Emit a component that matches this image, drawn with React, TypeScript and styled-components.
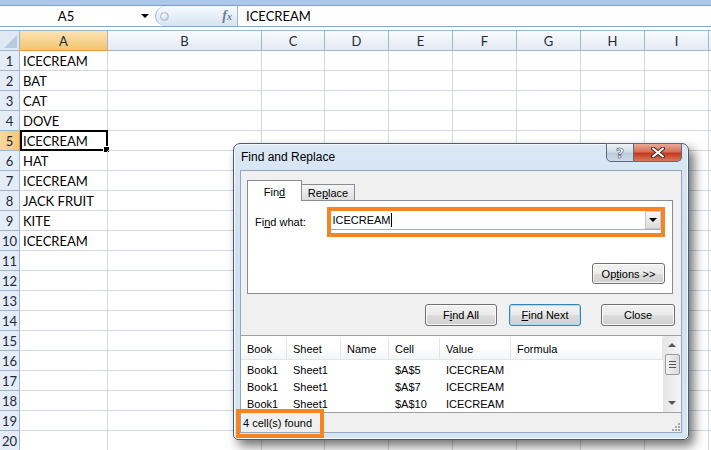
import React from 'react';
import styled, { createGlobalStyle, css } from 'styled-components';

const COLUMNS = ['A', 'B', 'C', 'D', 'E', 'F', 'G', 'H', 'I', ''];
const ROW_COUNT = 20;
const ACTIVE_ROW = 5;

const COLUMN_A: Record<number, string> = {
  1: 'ICECREAM',
  2: 'BAT',
  3: 'CAT',
  4: 'DOVE',
  5: 'ICECREAM',
  6: 'HAT',
  7: 'ICECREAM',
  8: 'JACK FRUIT',
  9: 'KITE',
  10: 'ICECREAM',
};

const LIST_COLUMNS = ['Book', 'Sheet', 'Name', 'Cell', 'Value', 'Formula'];

const RESULTS = [
  ['Book1', 'Sheet1', '', '$A$5', 'ICECREAM', ''],
  ['Book1', 'Sheet1', '', '$A$7', 'ICECREAM', ''],
  ['Book1', 'Sheet1', '', '$A$10', 'ICECREAM', ''],
];

const GlobalStyle = createGlobalStyle`
  * { box-sizing: border-box; }
  html, body { margin: 0; padding: 0; background: #fff; overflow: hidden; }
  body { font-family: Lato, "Liberation Sans", sans-serif; color: #000; }
`;

const Screen = styled.div`
  position: relative;
  width: 711px;
  height: 450px;
  overflow: hidden;
  background: #fff;
`;

/* ---------- formula bar ---------- */

const TopStrip = styled.div`
  height: 6px;
  background: #abc7ea;
  border-bottom: 1px solid #7f9dc3;
`;

const FormulaBar = styled.div`
  display: flex;
  height: 21px;
  margin-bottom: 3px;
  border-bottom: 1px solid #8da8cc;
  font-size: 13px;
`;

const NameBox = styled.div`
  display: flex;
  align-items: center;
  width: 155px;
`;

const NameValue = styled.span`
  width: 132px;
  text-align: center;
`;

const DropArrow = styled.span<{ $size?: number }>`
  width: 0;
  height: 0;
  border-left: ${(p) => p.$size ?? 4}px solid transparent;
  border-right: ${(p) => p.$size ?? 4}px solid transparent;
  border-top: ${(p) => p.$size ?? 4}px solid #000;
`;

const NameArrow = styled(DropArrow)`
  margin-left: 9px;
`;

const FxPill = styled.div`
  display: flex;
  align-items: center;
  justify-content: space-between;
  width: 83px;
  padding: 0 5px 0 4px;
  border: 1px solid #9fb5d2;
  border-width: 0 1px 0 1px;
  border-radius: 11px 0 0 11px;
  background: linear-gradient(#f8fbfe, #d6e3f2);
`;

const FxDot = styled.span`
  width: 9px;
  height: 9px;
  border-radius: 50%;
  border: 1px solid #a8b9cf;
  background: radial-gradient(circle at 35% 35%, #fff, #b7c7da);
`;

const FxLabel = styled.span`
  font-family: "Liberation Serif", serif;
  font-style: italic;
  font-weight: bold;
  font-size: 14px;
  color: #717f92;
  small {
    font-size: 10px;
  }
`;

const FormulaValue = styled.div`
  flex: 1;
  padding-left: 8px;
  line-height: 20px;
`;

/* ---------- sheet ---------- */

const Sheet = styled.div`
  display: grid;
  grid-template-columns: 20px 88px 154px 63px repeat(6, 64px) 1fr;
  grid-auto-rows: 20px;
  border-top: 1px solid #9eb6ce;
  font-size: 13px;
`;

const Corner = styled.div`
  position: relative;
  background: #dfe8f3;
  border-right: 1px solid #9eb6ce;
  border-bottom: 1px solid #9eb6ce;
  &::after {
    content: '';
    position: absolute;
    right: 2px;
    bottom: 2px;
    border-left: 13px solid transparent;
    border-bottom: 13px solid #b8c9de;
  }
`;

const headerActive = css`
  background: linear-gradient(#fae3b4, #f3c56f);
  border-bottom-color: #f29536;
`;

const ColHeader = styled.div<{ $active?: boolean }>`
  text-align: center;
  line-height: 20px;
  color: #1e2a38;
  background: linear-gradient(#f9fbfd, #e2eaf5);
  border-right: 1px solid #9eb6ce;
  border-bottom: 1px solid #9eb6ce;
  ${(p) => p.$active && headerActive}
`;

const RowHeader = styled.div<{ $active?: boolean }>`
  text-align: center;
  line-height: 20px;
  color: #1e2a38;
  background: #e4ecf7;
  border-right: 1px solid #9eb6ce;
  border-bottom: 1px solid #9eb6ce;
  ${(p) =>
    p.$active &&
    css`
      background: linear-gradient(90deg, #f9d99c, #f4c978);
      border-right-color: #f29536;
    `}
`;

const Cell = styled.div<{ $selected?: boolean }>`
  position: relative;
  padding-left: 3px;
  line-height: 20px;
  white-space: nowrap;
  border-right: 1px solid #d0d7e5;
  border-bottom: 1px solid #d0d7e5;
  ${(p) =>
    p.$selected &&
    css`
      &::before {
        content: '';
        position: absolute;
        top: -1px;
        left: 0;
        right: -1px;
        bottom: -1px;
        border: 2px solid #000;
      }
      &::after {
        content: '';
        position: absolute;
        right: -3px;
        bottom: -3px;
        width: 5px;
        height: 5px;
        background: #000;
        border: 1px solid #fff;
      }
    `}
`;

/* ---------- dialog ---------- */

const Window = styled.div`
  position: absolute;
  left: 233px;
  top: 143px;
  width: 456px;
  height: 297px;
  display: flex;
  flex-direction: column;
  padding: 0 6px 6px 6px;
  border: 1px solid #4c5d70;
  border-radius: 7px 7px 5px 5px;
  background: linear-gradient(#dbe7f4, #cddff1 35%, #d6e5f4);
  box-shadow: inset 0 0 0 1px rgba(255, 255, 255, 0.75), 5px 6px 11px rgba(0, 0, 0, 0.55);
  font-family: "Liberation Sans", Arial, sans-serif;
  font-size: 11px;
  color: #000;
`;

const TitleBar = styled.div`
  display: flex;
  align-items: center;
  height: 26px;
  flex-shrink: 0;
`;

const Title = styled.span`
  padding-left: 1px;
  font-size: 12px;
`;

const CaptionButtons = styled.div`
  display: flex;
  align-self: flex-start;
  margin: -1px 0 0 auto;
`;

const CaptionButton = styled.div<{ $close?: boolean }>`
  display: flex;
  align-items: center;
  justify-content: center;
  height: 19px;
  border: 1px solid #5a6a7e;
  ${(p) =>
    p.$close
      ? css`
          width: 48px;
          border-left: none;
          border-radius: 0 0 5px 0;
          background: linear-gradient(#e9ab9b, #d8705a 45%, #c2391f 55%, #d77a5c);
        `
      : css`
          width: 28px;
          border-radius: 0 0 0 5px;
          background: linear-gradient(#eef3f9, #d2dde9 45%, #bccadb 55%, #cdd9e6);
        `}
`;

const HelpGlyph = styled.span`
  font-family: "DejaVu Sans", sans-serif;
  font-weight: bold;
  font-size: 14px;
  line-height: 14px;
  color: #fff;
  -webkit-text-stroke: 0.6px #4a5566;
`;

const Client = styled.div`
  flex: 1;
  display: flex;
  flex-direction: column;
  background: #f0f0f0;
  border: 1px solid #93a7c0;
`;

const TabStrip = styled.div`
  display: flex;
  align-items: flex-end;
  height: 20px;
  margin: 9px 0 0 6px;
`;

const Tab = styled.div<{ $active?: boolean }>`
  display: flex;
  align-items: center;
  justify-content: center;
  border: 1px solid #898c95;
  border-bottom: none;
  ${(p) =>
    p.$active
      ? css`
          position: relative;
          z-index: 1;
          width: 55px;
          height: 21px;
          margin-bottom: -1px;
          padding-top: 1px;
          background: #fff;
        `
      : css`
          width: 53px;
          height: 16px;
          border-left: none;
          background: linear-gradient(#f6f6f6, #dcdcdc);
        `}
`;

const Acc = styled.span`
  text-decoration: underline;
`;

const TabPanel = styled.div`
  display: flex;
  flex-direction: column;
  height: 94px;
  margin: 0 8px 0 6px;
  padding: 6px 7px 9px 7px;
  background: #fff;
  border: 1px solid #898c95;
`;

const FindRow = styled.div`
  display: flex;
  align-items: center;
`;

const FieldLabel = styled.span`
  width: 73px;
`;

const Highlight = styled.div`
  width: 340px;
  height: 30px;
  padding: 0 0 3px 0;
  border: 4px solid #f68420;
  background: #fff;
`;

const ComboBox = styled.div`
  display: flex;
  align-items: center;
  height: 19px;
  padding-left: 1px;
  border-bottom: 1px solid #a5acb5;
`;

const ComboText = styled.span`
  flex: 1;
  display: flex;
  align-items: center;
`;

const Caret = styled.span`
  width: 1px;
  height: 14px;
  background: #000;
`;

const ComboArrow = styled.div`
  display: flex;
  align-items: center;
  justify-content: center;
  width: 16px;
  height: 18px;
  border: 1px solid #c6c9cf;
  background: linear-gradient(#f6f6f6, #dcdcdc);
`;

const Button = styled.div<{ $width: number; $gap?: number; $focus?: boolean }>`
  display: flex;
  align-items: center;
  justify-content: center;
  width: ${(p) => p.$width}px;
  height: 22px;
  margin-left: ${(p) => p.$gap ?? 0}px;
  border: 1px solid #707070;
  border-radius: 3px;
  background: linear-gradient(#f2f2f2, #ebebeb 50%, #dddddd 51%, #cfcfcf);
  box-shadow: inset 0 0 0 1px rgba(255, 255, 255, 0.8);
  ${(p) =>
    p.$focus &&
    css`
      border-color: #3c7fb1;
      box-shadow: inset 0 0 0 1px #a8dcf6;
    `}
`;

const OptionsButton = styled(Button)`
  align-self: flex-end;
  margin-top: auto;
  height: 21px;
`;

const ButtonRow = styled.div`
  display: flex;
  justify-content: flex-end;
  margin-top: 10px;
  padding-right: 6px;
`;

const ResultList = styled.div`
  display: flex;
  height: 78px;
  margin-top: 9px;
  background: #fff;
  border-top: 1px solid #a0a0a0;
  border-bottom: 1px solid #a0a0a0;
`;

const ListMain = styled.div`
  flex: 1;
  overflow: hidden;
`;

const listGrid = css`
  display: grid;
  grid-template-columns: 46px 54px 48px 51px 71px 1fr;
`;

const ListHeader = styled.div`
  ${listGrid};
  height: 24px;
  margin-bottom: 1px;
  padding-top: 2px;
  background: linear-gradient(#fff, #fff 50%, #f4f5f7);
  border-bottom: 1px solid #e3e5e8;
`;

const HeaderCell = styled.div`
  display: flex;
  align-items: center;
  padding-left: 6px;
  border-right: 1px solid #e3e5e8;
`;

const ListRow = styled.div`
  ${listGrid};
  height: 17px;
  align-items: center;
`;

const ListCell = styled.span`
  padding-left: 6px;
  white-space: nowrap;
`;

const ScrollBar = styled.div`
  display: flex;
  flex-direction: column;
  align-items: center;
  width: 18px;
  background: linear-gradient(90deg, #e6e6e6, #f4f4f4);
`;

const ScrollArrow = styled.span<{ $up?: boolean }>`
  width: 0;
  height: 0;
  margin: 7px 0;
  border-left: 4px solid transparent;
  border-right: 4px solid transparent;
  ${(p) =>
    p.$up ? 'border-bottom: 4px solid #555;' : 'border-top: 4px solid #555;'}
`;

const ScrollThumb = styled.div`
  display: flex;
  flex-direction: column;
  align-items: center;
  justify-content: center;
  gap: 2px;
  width: 15px;
  height: 21px;
  border: 1px solid #9a9a9a;
  border-radius: 2px;
  background: linear-gradient(90deg, #f3f3f3, #dadada);
  span {
    width: 7px;
    height: 1px;
    background: #555;
  }
`;

const ScrollSpace = styled.div`
  flex: 1;
`;

const StatusBar = styled.div`
  position: relative;
  flex: 1;
  display: flex;
  align-items: center;
  padding-left: 2px;
`;

const ResizeGrip = styled.svg`
  position: absolute;
  right: 1px;
  bottom: 1px;
`;

const StatusHighlight = styled.div`
  position: absolute;
  left: 2px;
  top: 265px;
  width: 88px;
  height: 29px;
  border: 4px solid #f68420;
`;

const FindDialog = () => (
  <Window>
    <TitleBar>
      <Title>Find and Replace</Title>
      <CaptionButtons>
        <CaptionButton>
          <HelpGlyph>?</HelpGlyph>
        </CaptionButton>
        <CaptionButton $close>
          <svg width="14" height="11" viewBox="0 0 14 11">
            <path d="M2 1.5 L12 9.5 M12 1.5 L2 9.5" stroke="#4a2a22" strokeWidth="4" strokeLinecap="round" />
            <path d="M2 1.5 L12 9.5 M12 1.5 L2 9.5" stroke="#fff" strokeWidth="2" strokeLinecap="round" />
          </svg>
        </CaptionButton>
      </CaptionButtons>
    </TitleBar>
    <Client>
      <TabStrip>
        <Tab $active>
          <span>
            Fin<Acc>d</Acc>
          </span>
        </Tab>
        <Tab>
          <span>
            Re<Acc>p</Acc>lace
          </span>
        </Tab>
      </TabStrip>
      <TabPanel>
        <FindRow>
          <FieldLabel>
            Fi<Acc>n</Acc>d what:
          </FieldLabel>
          <Highlight>
            <ComboBox>
              <ComboText>
                ICECREAM
                <Caret />
              </ComboText>
              <ComboArrow>
                <DropArrow $size={4} />
              </ComboArrow>
            </ComboBox>
          </Highlight>
        </FindRow>
        <OptionsButton $width={73}>
          <span>
            Op<Acc>t</Acc>ions &gt;&gt;
          </span>
        </OptionsButton>
      </TabPanel>
      <ButtonRow>
        <Button $width={72}>
          <span>
            F<Acc>i</Acc>nd All
          </span>
        </Button>
        <Button $width={72} $gap={12} $focus>
          <span>
            <Acc>F</Acc>ind Next
          </span>
        </Button>
        <Button $width={74} $gap={20}>
          Close
        </Button>
      </ButtonRow>
      <ResultList>
        <ListMain>
          <ListHeader>
            {LIST_COLUMNS.map((c) => (
              <HeaderCell key={c}>{c}</HeaderCell>
            ))}
          </ListHeader>
          {RESULTS.map((row, i) => (
            <ListRow key={i}>
              {row.map((v, j) => (
                <ListCell key={j}>{v}</ListCell>
              ))}
            </ListRow>
          ))}
        </ListMain>
        <ScrollBar>
          <ScrollArrow $up />
          <ScrollThumb>
            <span />
            <span />
            <span />
          </ScrollThumb>
          <ScrollSpace />
          <ScrollArrow />
        </ScrollBar>
      </ResultList>
      <StatusBar>
        4 cell(s) found
        <ResizeGrip width="10" height="10" viewBox="0 0 10 10">
          {[
            [8, 2],
            [8, 5],
            [5, 5],
            [8, 8],
            [5, 8],
            [2, 8],
          ].map(([x, y]) => (
            <rect key={`${x}-${y}`} x={x} y={y} width="2" height="2" fill="#a5a5a5" />
          ))}
        </ResizeGrip>
      </StatusBar>
    </Client>
    <StatusHighlight />
  </Window>
);

const App = () => {
  const rows = Array.from({ length: ROW_COUNT }, (_, i) => i + 1);
  return (
    <Screen>
      <GlobalStyle />
      <TopStrip />
      <FormulaBar>
        <NameBox>
          <NameValue>A5</NameValue>
          <NameArrow />
        </NameBox>
        <FxPill>
          <FxDot />
          <FxLabel>
            f<small>x</small>
          </FxLabel>
        </FxPill>
        <FormulaValue>ICECREAM</FormulaValue>
      </FormulaBar>
      <Sheet>
        <Corner />
        {COLUMNS.map((c, i) => (
          <ColHeader key={i} $active={c === 'A'}>
            {c}
          </ColHeader>
        ))}
        {rows.map((r) => (
          <React.Fragment key={r}>
            <RowHeader $active={r === ACTIVE_ROW}>{r}</RowHeader>
            {COLUMNS.map((c, i) => (
              <Cell key={i} $selected={c === 'A' && r === ACTIVE_ROW}>
                {c === 'A' ? COLUMN_A[r] : ''}
              </Cell>
            ))}
          </React.Fragment>
        ))}
      </Sheet>
      <FindDialog />
    </Screen>
  );
};

export default App;
